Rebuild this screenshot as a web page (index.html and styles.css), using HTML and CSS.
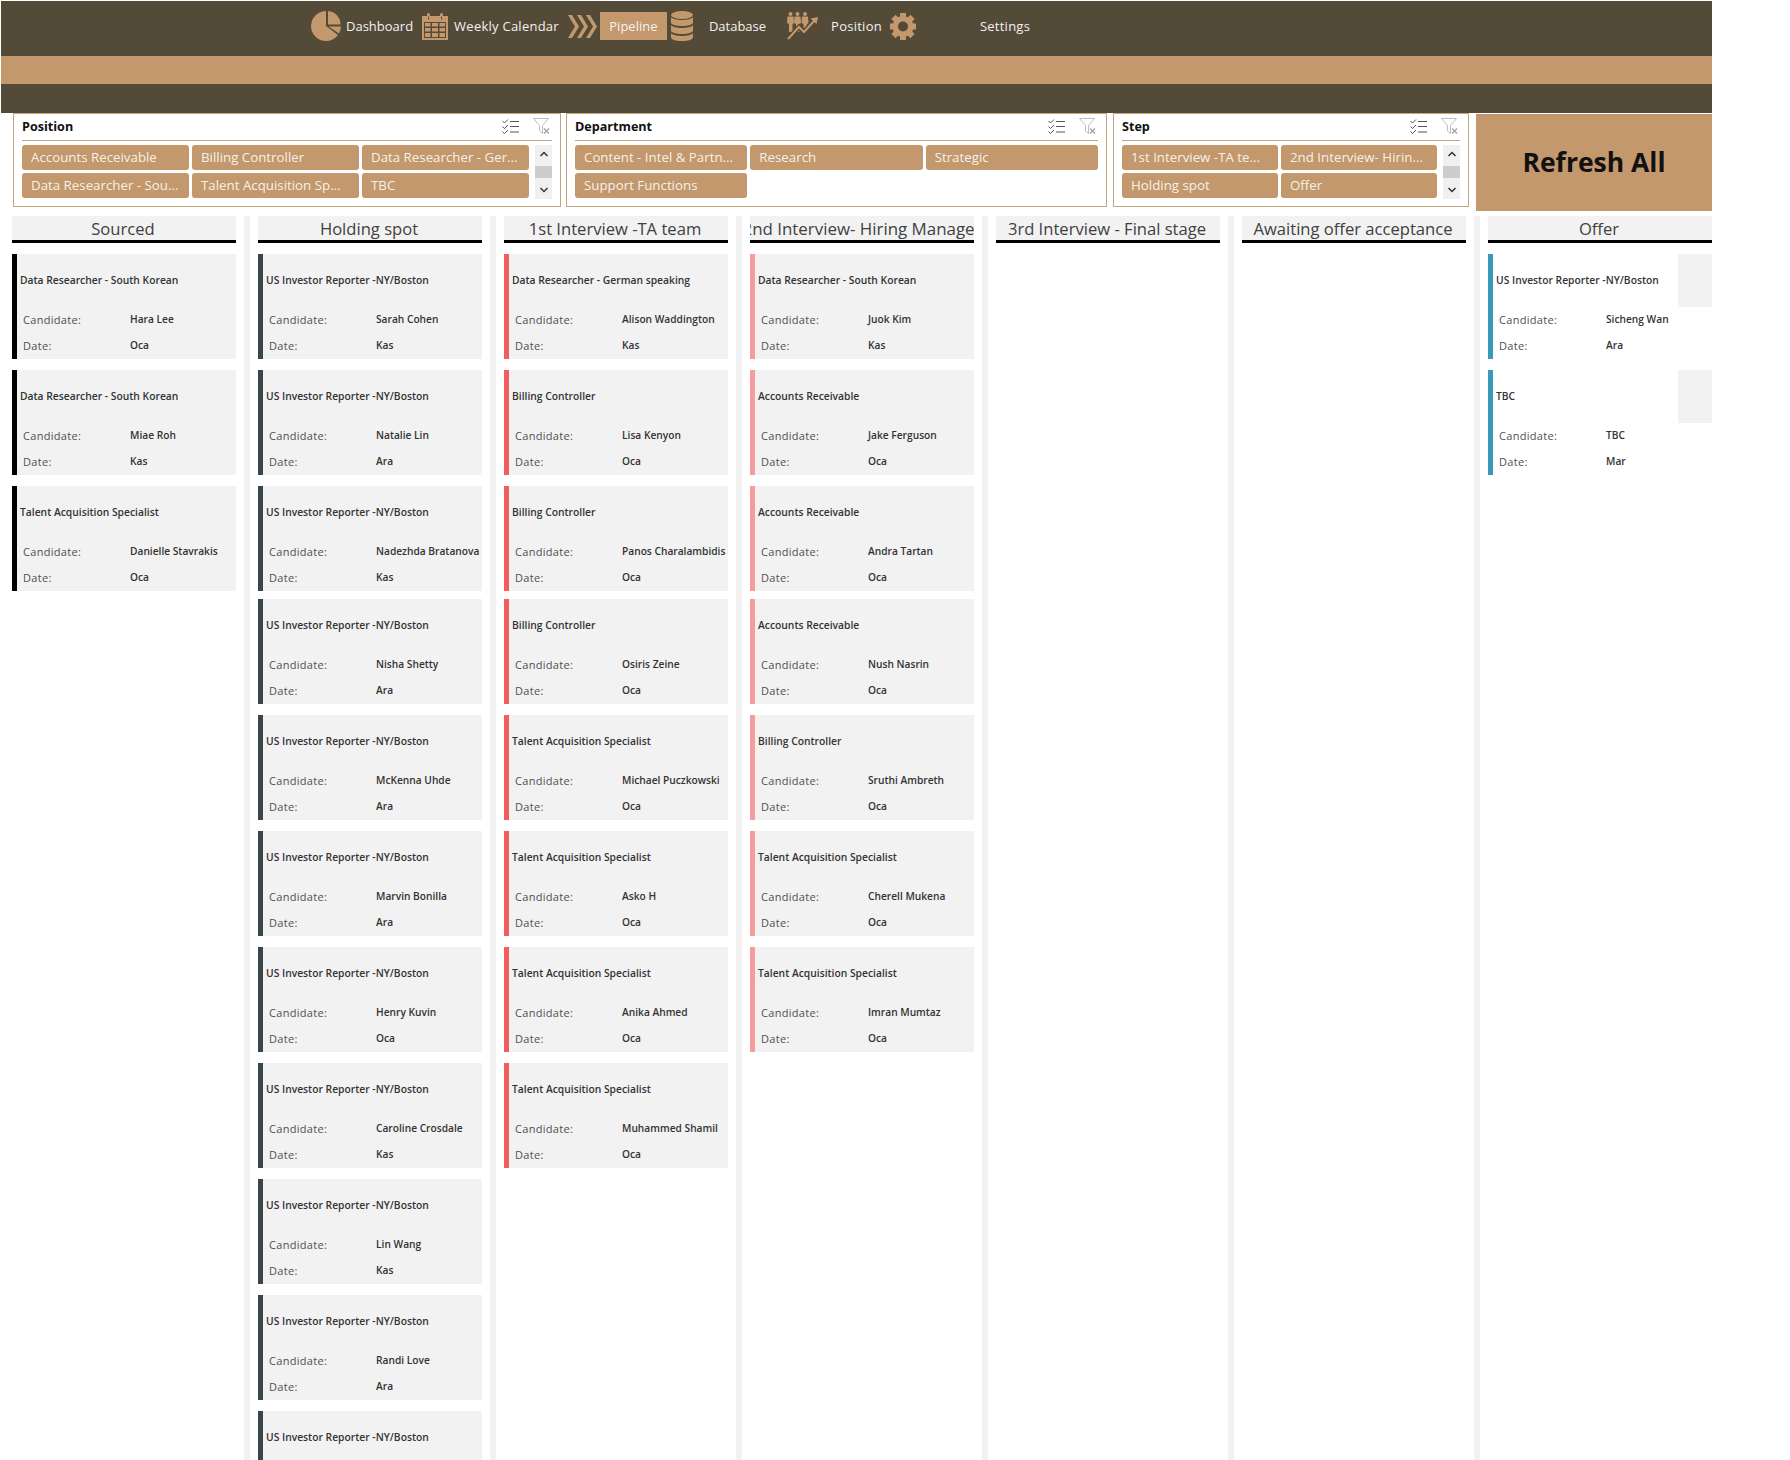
FILE: index.html
```html
<!DOCTYPE html>
<html lang="en">
<head>
<meta charset="utf-8">
<title>Pipeline</title>
<link rel="stylesheet" href="styles.css">
</head>
<body>
<div class="app">
  <nav class="nav">
    <svg class="ico ico-pie" viewBox="0 0 30 30"><path d="M15 0A15 15 0 1 0 27 24L15 15Z"/><path d="M17 0A13.500 13.500 0 0 1 29.500 13.500H17Z"/><path d="M17.500 15.500H30A15 15 0 0 1 28 22.500Z"/></svg>
    <span class="nav-label nav-dash">Dashboard</span>
    <svg class="ico ico-cal" viewBox="0 0 26 27"><path fill-rule="evenodd" d="M0 3H5V1.500a1.500 1.500 0 0 1 3 0V3H18V1.500a1.500 1.500 0 0 1 3 0V3H26V27H0ZM2 9V25H24V9ZM6 3.500V6.500H7V3.500ZM19 3.500V6.500H20V3.500Z"/><path d="M3 10H8.500V13.500H3ZM10 10H16V13.500H10ZM17.500 10H23V13.500H17.500ZM3 15H8.500V18.500H3ZM10 15H16V18.500H10ZM17.500 15H23V18.500H17.500ZM3 20H8.500V24H3ZM10 20H16V24H10ZM17.500 20H23V24H17.500Z"/></svg>
    <span class="nav-label nav-wide">Weekly Calendar</span>
    <svg class="ico ico-chev" viewBox="0 0 29 23"><path d="M0 0H4L11 11.500L4 23H0L7 11.500ZM9 0H13L20 11.500L13 23H9L16 11.500ZM18 0H22L29 11.500L22 23H18L25 11.500Z"/></svg>
    <span class="nav-active">Pipeline</span>
    <svg class="ico ico-db" viewBox="0 0 22 30"><ellipse cx="11" cy="4" rx="11" ry="4"/><path d="M0 6C2 10 20 10 22 6V12C20 16 2 16 0 12ZM0 14C2 18 20 18 22 14V20C20 24 2 24 0 20ZM0 22C2 26 20 26 22 22V26C22 31.500 0 31.500 0 26Z"/></svg>
    <span class="nav-label nav-db">Database</span>
    <svg class="ico ico-pos" viewBox="0 0 31 28"><circle cx="3.500" cy="2" r="2"/><circle cx="10.500" cy="2" r="2"/><circle cx="18" cy="2" r="2"/><path d="M.5 4.500H6.500L7 11L5.500 12V20H2V12L0 11ZM7.500 4.500H13.500L14 11L12.500 12V20H9V12L7 11ZM15 4.500H21L21.500 11L20 12V20H16.500V12L14.500 11Z"/><path class="ico-cut" d="M1 27L12 15L17 20L28 8"/><path class="ico-line" d="M1 27L12 15L17 20L28 8"/><path d="M31 5L23.500 6.500L29.500 12Z"/></svg>
    <span class="nav-label nav-pos nav-wide">Position</span>
    <svg class="ico ico-gear" viewBox="0 0 26 27"><rect x="10" y="0" width="6" height="27"/><rect x="10" y="0" width="6" height="27" transform="rotate(45 13 13.500)"/><rect x="10" y="0" width="6" height="27" transform="rotate(90 13 13.500)"/><rect x="10" y="0" width="6" height="27" transform="rotate(135 13 13.500)"/><circle cx="13" cy="13.500" r="10.500"/><circle class="ico-hole" cx="13" cy="13.500" r="5"/></svg>
    <span class="nav-label nav-set nav-wide">Settings</span>
  </nav>
  <div class="band-tan"></div>
  <div class="band-dark"></div>

  <section class="filters">
    <div class="slicer slicer-pos">
      <header class="slicer-head"><span class="slicer-title">Position</span>
        <svg class="tool" viewBox="0 0 18 15"><path d="M.5 2L2.500 4L6 .5M.5 7.500L2.500 9.500L6 6M.5 12.500L2.500 14.500L6 11M8 2.500H17M8 7.500H17M8 13H17"/></svg>
        <svg class="tool tool-f" viewBox="0 0 17 16"><path d="M.5.500H15.500L9.500 7.500V15.500L6.500 13V7.500Z"/><path class="x" d="M11 10.500L16 15.500M16 10.500L11 15.500"/></svg>
      </header>
      <div class="slicer-body">
        <div class="btns">
          <span class="btn">Accounts Receivable</span><span class="btn">Billing Controller</span><span class="btn">Data Researcher - Ger...</span>
          <span class="btn">Data Researcher - Sou...</span><span class="btn">Talent Acquisition Sp...</span><span class="btn">TBC</span>
        </div>
        <div class="scroll"><svg viewBox="0 0 10 6"><path d="M1.500 5L5 1.500L8.500 5"/></svg><i></i><svg viewBox="0 0 10 6"><path d="M1.500 1L5 4.500L8.500 1"/></svg></div>
      </div>
    </div>
    <div class="slicer slicer-dep">
      <header class="slicer-head"><span class="slicer-title">Department</span>
        <svg class="tool" viewBox="0 0 18 15"><path d="M.5 2L2.500 4L6 .5M.5 7.500L2.500 9.500L6 6M.5 12.500L2.500 14.500L6 11M8 2.500H17M8 7.500H17M8 13H17"/></svg>
        <svg class="tool tool-f" viewBox="0 0 17 16"><path d="M.5.500H15.500L9.500 7.500V15.500L6.500 13V7.500Z"/><path class="x" d="M11 10.500L16 15.500M16 10.500L11 15.500"/></svg>
      </header>
      <div class="slicer-body">
        <div class="btns">
          <span class="btn">Content - Intel &amp; Partn...</span><span class="btn">Research</span><span class="btn">Strategic</span>
          <span class="btn">Support Functions</span>
        </div>
      </div>
    </div>
    <div class="slicer slicer-step">
      <header class="slicer-head"><span class="slicer-title">Step</span>
        <svg class="tool" viewBox="0 0 18 15"><path d="M.5 2L2.500 4L6 .5M.5 7.500L2.500 9.500L6 6M.5 12.500L2.500 14.500L6 11M8 2.500H17M8 7.500H17M8 13H17"/></svg>
        <svg class="tool tool-f" viewBox="0 0 17 16"><path d="M.5.500H15.500L9.500 7.500V15.500L6.500 13V7.500Z"/><path class="x" d="M11 10.500L16 15.500M16 10.500L11 15.500"/></svg>
      </header>
      <div class="slicer-body">
        <div class="btns btns-2">
          <span class="btn">1st Interview -TA te...</span><span class="btn">2nd Interview- Hirin...</span>
          <span class="btn">Holding spot</span><span class="btn">Offer</span>
        </div>
        <div class="scroll"><svg viewBox="0 0 10 6"><path d="M1.500 5L5 1.500L8.500 5"/></svg><i></i><svg viewBox="0 0 10 6"><path d="M1.500 1L5 4.500L8.500 1"/></svg></div>
      </div>
    </div>
    <div class="refresh">Refresh All</div>
  </section>

  <main class="board">
    <section class="col c-black">
      <h2 class="col-head"><span>Sourced</span></h2>
      <div class="card"><div class="c-title">Data Researcher - South Korean</div><div class="row"><span class="lab">Candidate:</span><b>Hara Lee</b></div><div class="row"><span class="lab">Date:</span><b>Oca</b></div></div>
      <div class="card"><div class="c-title">Data Researcher - South Korean</div><div class="row"><span class="lab">Candidate:</span><b>Miae Roh</b></div><div class="row"><span class="lab">Date:</span><b>Kas</b></div></div>
      <div class="card"><div class="c-title">Talent Acquisition Specialist</div><div class="row"><span class="lab">Candidate:</span><b>Danielle Stavrakis</b></div><div class="row"><span class="lab">Date:</span><b>Oca</b></div></div>
    </section>
    <section class="col c-slate">
      <h2 class="col-head"><span>Holding spot</span></h2>
      <div class="card"><div class="c-title">US Investor Reporter -NY/Boston</div><div class="row"><span class="lab">Candidate:</span><b>Sarah Cohen</b></div><div class="row"><span class="lab">Date:</span><b>Kas</b></div></div>
      <div class="card"><div class="c-title">US Investor Reporter -NY/Boston</div><div class="row"><span class="lab">Candidate:</span><b>Natalie Lin</b></div><div class="row"><span class="lab">Date:</span><b>Ara</b></div></div>
      <div class="card"><div class="c-title">US Investor Reporter -NY/Boston</div><div class="row"><span class="lab">Candidate:</span><b>Nadezhda Bratanova</b></div><div class="row"><span class="lab">Date:</span><b>Kas</b></div></div>
      <div class="card"><div class="c-title">US Investor Reporter -NY/Boston</div><div class="row"><span class="lab">Candidate:</span><b>Nisha Shetty</b></div><div class="row"><span class="lab">Date:</span><b>Ara</b></div></div>
      <div class="card"><div class="c-title">US Investor Reporter -NY/Boston</div><div class="row"><span class="lab">Candidate:</span><b>McKenna Uhde</b></div><div class="row"><span class="lab">Date:</span><b>Ara</b></div></div>
      <div class="card"><div class="c-title">US Investor Reporter -NY/Boston</div><div class="row"><span class="lab">Candidate:</span><b>Marvin Bonilla</b></div><div class="row"><span class="lab">Date:</span><b>Ara</b></div></div>
      <div class="card"><div class="c-title">US Investor Reporter -NY/Boston</div><div class="row"><span class="lab">Candidate:</span><b>Henry Kuvin</b></div><div class="row"><span class="lab">Date:</span><b>Oca</b></div></div>
      <div class="card"><div class="c-title">US Investor Reporter -NY/Boston</div><div class="row"><span class="lab">Candidate:</span><b>Caroline Crosdale</b></div><div class="row"><span class="lab">Date:</span><b>Kas</b></div></div>
      <div class="card"><div class="c-title">US Investor Reporter -NY/Boston</div><div class="row"><span class="lab">Candidate:</span><b>Lin Wang</b></div><div class="row"><span class="lab">Date:</span><b>Kas</b></div></div>
      <div class="card"><div class="c-title">US Investor Reporter -NY/Boston</div><div class="row"><span class="lab">Candidate:</span><b>Randi Love</b></div><div class="row"><span class="lab">Date:</span><b>Ara</b></div></div>
      <div class="card"><div class="c-title">US Investor Reporter -NY/Boston</div></div>
    </section>
    <section class="col c-red">
      <h2 class="col-head"><span>1st Interview -TA team</span></h2>
      <div class="card"><div class="c-title">Data Researcher - German speaking</div><div class="row"><span class="lab">Candidate:</span><b>Alison Waddington</b></div><div class="row"><span class="lab">Date:</span><b>Kas</b></div></div>
      <div class="card"><div class="c-title">Billing Controller</div><div class="row"><span class="lab">Candidate:</span><b>Lisa Kenyon</b></div><div class="row"><span class="lab">Date:</span><b>Oca</b></div></div>
      <div class="card"><div class="c-title">Billing Controller</div><div class="row"><span class="lab">Candidate:</span><b>Panos Charalambidis</b></div><div class="row"><span class="lab">Date:</span><b>Oca</b></div></div>
      <div class="card"><div class="c-title">Billing Controller</div><div class="row"><span class="lab">Candidate:</span><b>Osiris Zeine</b></div><div class="row"><span class="lab">Date:</span><b>Oca</b></div></div>
      <div class="card"><div class="c-title">Talent Acquisition Specialist</div><div class="row"><span class="lab">Candidate:</span><b>Michael Puczkowski</b></div><div class="row"><span class="lab">Date:</span><b>Oca</b></div></div>
      <div class="card"><div class="c-title">Talent Acquisition Specialist</div><div class="row"><span class="lab">Candidate:</span><b>Asko H</b></div><div class="row"><span class="lab">Date:</span><b>Oca</b></div></div>
      <div class="card"><div class="c-title">Talent Acquisition Specialist</div><div class="row"><span class="lab">Candidate:</span><b>Anika Ahmed</b></div><div class="row"><span class="lab">Date:</span><b>Oca</b></div></div>
      <div class="card"><div class="c-title">Talent Acquisition Specialist</div><div class="row"><span class="lab">Candidate:</span><b>Muhammed Shamil</b></div><div class="row"><span class="lab">Date:</span><b>Oca</b></div></div>
    </section>
    <section class="col c-pink">
      <h2 class="col-head col-head-long"><span>2nd Interview- Hiring Manager</span></h2>
      <div class="card"><div class="c-title">Data Researcher - South Korean</div><div class="row"><span class="lab">Candidate:</span><b>Juok Kim</b></div><div class="row"><span class="lab">Date:</span><b>Kas</b></div></div>
      <div class="card"><div class="c-title">Accounts Receivable</div><div class="row"><span class="lab">Candidate:</span><b>Jake Ferguson</b></div><div class="row"><span class="lab">Date:</span><b>Oca</b></div></div>
      <div class="card"><div class="c-title">Accounts Receivable</div><div class="row"><span class="lab">Candidate:</span><b>Andra Tartan</b></div><div class="row"><span class="lab">Date:</span><b>Oca</b></div></div>
      <div class="card"><div class="c-title">Accounts Receivable</div><div class="row"><span class="lab">Candidate:</span><b>Nush Nasrin</b></div><div class="row"><span class="lab">Date:</span><b>Oca</b></div></div>
      <div class="card"><div class="c-title">Billing Controller</div><div class="row"><span class="lab">Candidate:</span><b>Sruthi Ambreth</b></div><div class="row"><span class="lab">Date:</span><b>Oca</b></div></div>
      <div class="card"><div class="c-title">Talent Acquisition Specialist</div><div class="row"><span class="lab">Candidate:</span><b>Cherell Mukena</b></div><div class="row"><span class="lab">Date:</span><b>Oca</b></div></div>
      <div class="card"><div class="c-title">Talent Acquisition Specialist</div><div class="row"><span class="lab">Candidate:</span><b>Imran Mumtaz</b></div><div class="row"><span class="lab">Date:</span><b>Oca</b></div></div>
    </section>
    <section class="col">
      <h2 class="col-head"><span>3rd Interview - Final stage</span></h2>
    </section>
    <section class="col">
      <h2 class="col-head"><span>Awaiting offer acceptance</span></h2>
    </section>
    <section class="col c-blue">
      <h2 class="col-head"><span>Offer</span></h2>
      <div class="card card-open"><div class="c-title">US Investor Reporter -NY/Boston</div><div class="row"><span class="lab">Candidate:</span><b>Sicheng Wan</b></div><div class="row"><span class="lab">Date:</span><b>Ara</b></div></div>
      <div class="card card-open"><div class="c-title">TBC</div><div class="row"><span class="lab">Candidate:</span><b>TBC</b></div><div class="row"><span class="lab">Date:</span><b>Mar</b></div></div>
    </section>
  </main>
</div>
</body>
</html>
```

FILE: styles.css
```css
* { box-sizing: border-box; }
html, body { margin: 0; padding: 0; background: #fff; }
.app {
  width: 1790px;
  height: 1460px;
  overflow: hidden;
  padding: 1px 0 0 1px;
  font-family: "Open Sans", "Noto Sans", sans-serif;
  color: #404040;
}

/* Top bands */
.nav {
  width: 1711px;
  height: 55px;
  background: #544a38;
  display: flex;
  align-items: center;
  padding: 0 0 5px 310px;
}
.band-tan { width: 1711px; height: 28px; background: #c2986c; }
.band-dark { width: 1711px; height: 29px; background: #544a38; }
.ico { display: block; fill: #c2986c; flex: none; }
.ico-pie { width: 30px; height: 30px; }
.ico-cal { width: 26px; height: 27px; margin-left: 9px; }
.ico-chev { width: 29px; height: 23px; margin-left: 9px; }
.ico-db { width: 22px; height: 30px; margin-left: 4px; }
.ico-pos { width: 31px; height: 28px; margin-left: 21px; }
.ico-gear { width: 26px; height: 27px; margin-left: 8px; }
.ico-cut { fill: none; stroke: #544a38; stroke-width: 5; }
.ico-line { fill: none; stroke: #c2986c; stroke-width: 2; }
.ico-hole { fill: #544a38; }
.nav-label {
  font-size: 13px;
  color: #f2f2f2;
  margin-left: 6px;
  white-space: nowrap;
}
.nav-dash { margin-left: 5px; }
.nav-wide { letter-spacing: .25px; }
.nav-db { margin-left: 16px; }
.nav-pos { margin-left: 13px; }
.nav-set { margin-left: 64px; }
.nav-active {
  width: 67px;
  height: 28px;
  margin-left: 3px;
  background: #c2986c;
  color: #f2f2f2;
  font-size: 13px;
  display: flex;
  align-items: center;
  justify-content: center;
  flex: none;
}

/* Slicers */
.filters {
  display: flex;
  align-items: flex-start;
  height: 103px;
  padding-left: 12px;
}
.slicer {
  height: 94px;
  border: 1px solid #c2a67f;
  padding: 0 8px;
  background: #fff;
  flex: none;
}
.slicer-pos { width: 548px; }
.slicer-dep { width: 541px; margin-left: 5px; }
.slicer-step { width: 356px; margin-left: 6px; }
.slicer-head {
  height: 27px;
  border-bottom: 1px solid #c2a67f;
  padding-bottom: 2px;
  display: flex;
  align-items: center;
}
.slicer-title {
  font-size: 12.6px;
  font-weight: 700;
  color: #111;
  margin-right: auto;
}
.tool {
  display: block;
  width: 18px;
  height: 15px;
  fill: none;
  stroke: #555;
  stroke-width: 1;
  margin-right: 13px;
}
.tool-f {
  width: 17px;
  height: 16px;
  stroke: #bdbdbd;
  margin-right: 2px;
}
.tool-f .x { stroke: #a8a8a8; stroke-width: 1.5; }
.slicer-body {
  display: flex;
  margin-top: 4px;
}
.btns {
  flex: 1;
  display: grid;
  grid-template-columns: repeat(3, 1fr);
  grid-auto-rows: 25px;
  gap: 3px;
}
.btns-2 { grid-template-columns: repeat(2, 1fr); }
.btn {
  background: #c2986c;
  color: #f5f1ea;
  font-size: 13.3px;
  line-height: 25px;
  padding-left: 9px;
  border-radius: 3px;
  white-space: nowrap;
  overflow: hidden;
}
.scroll {
  width: 17px;
  height: 54px;
  margin-left: 6px;
  background: #f0f0f0;
  display: flex;
  flex-direction: column;
  align-items: center;
  justify-content: space-between;
  padding: 6px 0;
}
.scroll svg {
  display: block;
  width: 10px;
  height: 6px;
  fill: none;
  stroke: #333;
  stroke-width: 1.500;
}
.scroll i {
  display: block;
  width: 100%;
  height: 12px;
  background: #cdcdcd;
}
.refresh {
  width: 236px;
  height: 97px;
  margin: 1px 0 0 7px;
  padding-bottom: 2px;
  background: #c2986c;
  color: #111;
  font-size: 26.5px;
  font-weight: 700;
  display: flex;
  align-items: center;
  justify-content: center;
  flex: none;
}

/* Board */
.board {
  display: flex;
  align-items: stretch;
  height: 1244px;
  padding-left: 11px;
  overflow: hidden;
}
.col {
  width: 224px;
  flex: none;
}
.col + .col {
  width: 238px;
  margin-left: 8px;
  border-left: 6px solid #f2f2f2;
  padding-left: 8px;
}
.col-head {
  margin: 0 0 11px;
  height: 27px;
  padding-right: 2px;
  background: #f2f2f2;
  border-bottom: 3px solid #000;
  font-size: 16.6px;
  font-weight: 400;
  line-height: 26px;
  color: #404040;
  display: flex;
  justify-content: center;
  overflow: hidden;
  white-space: nowrap;
}
.col-head-long { font-size: 16.9px; padding-right: 0; }
.col-head span { flex: none; }
.card {
  height: 105px;
  margin-bottom: 11px;
  background: #f2f2f2;
  border-left: 5px solid #000;
  position: relative;
}
.card:nth-child(4) { margin-bottom: 8px; }
.c-black .card { border-left-color: #000; }
.c-slate .card { border-left-color: #37474b; }
.c-red .card { border-left-color: #f25c5c; }
.c-pink .card { border-left-color: #f59c9c; }
.c-blue .card { border-left-color: #3a98b9; }
.card-open { background: #fff; }
.card-open::after {
  content: "";
  position: absolute;
  top: 0;
  right: 0;
  width: 34px;
  height: 53px;
  background: #f2f2f2;
}
.c-title {
  height: 52px;
  padding-left: 3px;
  display: flex;
  align-items: center;
  font-size: 10.3px;
  font-weight: 600;
  color: #333;
  white-space: nowrap;
}
.row {
  height: 26px;
  display: flex;
  align-items: center;
  padding-left: 6px;
  white-space: nowrap;
}
.lab {
  width: 107px;
  font-size: 11px;
  letter-spacing: .3px;
  color: #505050;
  flex: none;
}
.row b {
  font-size: 10.2px;
  font-weight: 600;
  color: #333;
}
```
